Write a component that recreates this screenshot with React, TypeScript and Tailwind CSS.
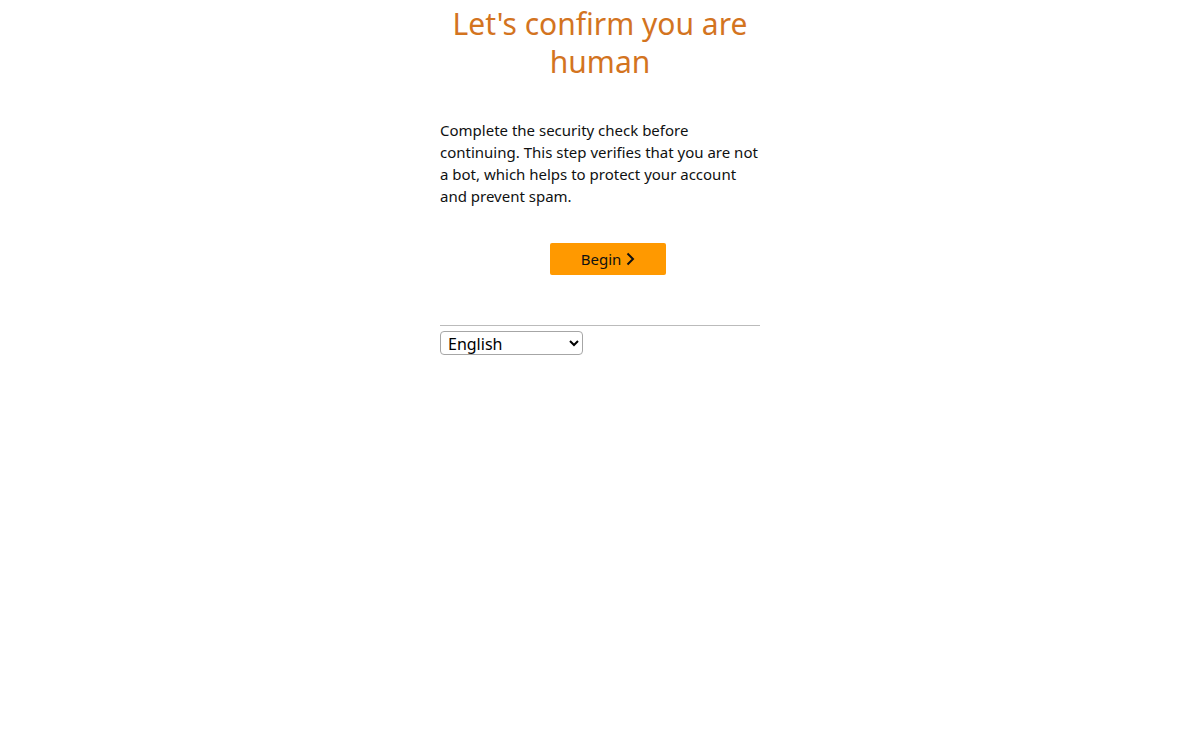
import React from "react";

export default function App() {
  return (
    <div className="min-h-[750px] bg-white" style={{ fontFamily: '"Noto Sans", "Open Sans", Arial, sans-serif' }}>
      <div className="mx-auto w-[320px] pt-[5px]">
        <h1 className="text-center text-[30px] leading-[38px] font-normal text-[#d3741f]">
          Let's confirm you are human
        </h1>
        <p className="mt-[38px] text-[15px] leading-[22px] text-[#0f1111]">
          Complete the security check before continuing. This step verifies that you are not a bot, which helps to protect your account and prevent spam.
        </p>
        <div className="mt-[36px] flex justify-center pl-[16px]">
          <button className="flex h-[32px] w-[116px] items-center justify-center gap-[5px] rounded-[2px] bg-[#ff9900] text-[15px] text-[#0f1111]">
            <span>Begin</span>
            <svg width="9" height="14" viewBox="0 0 9 14" fill="none">
              <path d="M1.5 1.5 L7 7 L1.5 12.5" stroke="#0f1111" strokeWidth="2" />
            </svg>
          </button>
        </div>
        <div className="mt-[50px] border-t border-[#bbbbbb]" />
        <select className="mt-[5px] h-[24px] w-[143px] rounded-[4px] border border-[#a6a6a6] bg-white px-[3px] text-[16px] text-black">
          <option>English</option>
        </select>
      </div>
    </div>
  );
}
